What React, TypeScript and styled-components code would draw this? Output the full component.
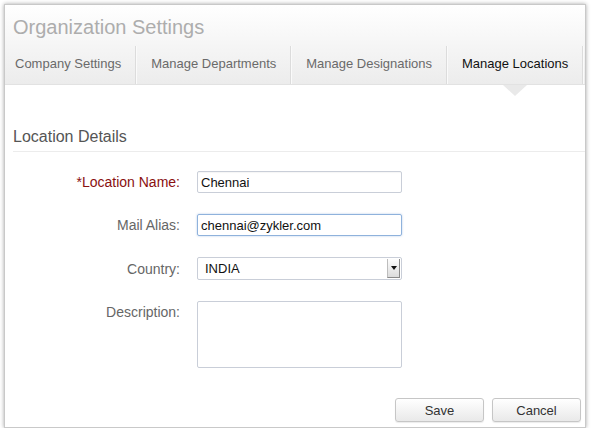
import React from "react";
import styled, { createGlobalStyle } from "styled-components";

const Global = createGlobalStyle`
  html, body { margin: 0; padding: 0; background: #ffffff; }
  body { font-family: "Liberation Sans", Arial, sans-serif; }
  * { box-sizing: border-box; }
`;

const Panel = styled.div`
  margin: 4px 0 0 4px;
  width: 582px;
  height: 424px;
  background: #fff;
  border: 1px solid #c9c9c9;
  box-shadow: 0 0 4px rgba(0, 0, 0, 0.35);
  display: flex;
  flex-direction: column;
  position: relative;
`;

const Header = styled.div`
  background: linear-gradient(#ffffff, #ececec);
  border-bottom: 1px solid #e2e2e2;
  display: flex;
  flex-direction: column;
`;

const Title = styled.div`
  height: 41px;
  padding: 10px 0 0 8px;
  font-size: 20px;
  color: #adadad;
  line-height: 24px;
`;

const Tabs = styled.div`
  display: flex;
  height: 38px;
`;

const Tab = styled.div<{ $active?: boolean; $first?: boolean }>`
  position: relative;
  display: flex;
  align-items: center;
  white-space: nowrap;
  padding: 0 14px 3px ${(p) => (p.$first ? "10px" : "15px")};
  border-right: 1px solid #dcdcdc;
  box-shadow: 1px 0 0 #fafafa;
  font-size: 13px;
  color: ${(p) => (p.$active ? "#111" : "#6a6a6a")};
`;

const Arrow = styled.div`
  position: absolute;
  left: 50%;
  bottom: -12px;
  margin-left: -12px;
  width: 0;
  height: 0;
  border-left: 12px solid transparent;
  border-right: 12px solid transparent;
  border-top: 11px solid #e9e9e9;
  z-index: 2;
`;

const Body = styled.div`
  flex: 1;
  display: flex;
  flex-direction: column;
  padding: 43px 0 0 8px;
`;

const SectionTitle = styled.div`
  font-size: 16px;
  color: #555;
  line-height: 18px;
  padding-bottom: 5px;
  border-bottom: 1px solid #ececec;
`;

const Form = styled.div`
  display: grid;
  grid-template-columns: 167px 205px;
  column-gap: 17px;
  row-gap: 21px;
  margin-top: 19px;
`;

const Label = styled.div<{ $required?: boolean; $top?: boolean }>`
  text-align: right;
  font-size: 14px;
  color: ${(p) => (p.$required ? "#8a1010" : "#666")};
  align-self: ${(p) => (p.$top ? "start" : "center")};
  padding-top: ${(p) => (p.$top ? "3px" : "0")};
`;

const Input = styled.div<{ $focused?: boolean }>`
  height: 22px;
  border: 1px solid ${(p) => (p.$focused ? "#8fb2dc" : "#c9ced8")};
  border-radius: 2px;
  box-shadow: ${(p) =>
    p.$focused ? "0 0 2px rgba(90,140,210,0.5)" : "inset 0 1px 1px rgba(0,0,0,0.04)"};
  font-size: 13px;
  color: #111;
  padding: 0 3px;
  display: flex;
  align-items: center;
`;

const Select = styled.div`
  height: 23px;
  border: 1px solid #c9ced8;
  border-radius: 2px;
  font-size: 13px;
  color: #111;
  padding: 0 1px 0 7px;
  display: flex;
  align-items: center;
  justify-content: space-between;
`;

const SelectButton = styled.div`
  width: 13px;
  height: 19px;
  background: linear-gradient(#fdfdfd, #dcdcdc);
  border-left: 1px solid #bdbdbd;
  border-right: 1px solid #8a8a8a;
  border-bottom: 1px solid #8a8a8a;
  display: flex;
  align-items: center;
  justify-content: center;
  &::after {
    content: "";
    border-left: 3px solid transparent;
    border-right: 3px solid transparent;
    border-top: 4px solid #111;
  }
`;

const TextArea = styled.div`
  height: 67px;
  border: 1px solid #c9ced8;
  border-radius: 2px;
`;

const Footer = styled.div`
  margin-top: auto;
  display: flex;
  justify-content: flex-end;
  gap: 8px;
  padding: 0 4px 5px 0;
`;

const Button = styled.div`
  width: 89px;
  height: 24px;
  border: 1px solid #c6c6c6;
  border-radius: 3px;
  background: linear-gradient(#ffffff, #e9e9e9);
  box-shadow: 0 1px 1px rgba(0, 0, 0, 0.08);
  font-size: 13px;
  color: #333;
  display: flex;
  align-items: center;
  justify-content: center;
`;

export default function App() {
  return (
    <>
      <Global />
      <Panel>
        <Header>
          <Title>Organization Settings</Title>
          <Tabs>
            <Tab $first>Company Settings</Tab>
            <Tab>Manage Departments</Tab>
            <Tab>Manage Designations</Tab>
            <Tab $active>
              Manage Locations
              <Arrow />
            </Tab>
          </Tabs>
        </Header>
        <Body>
          <SectionTitle>Location Details</SectionTitle>
          <Form>
            <Label $required>*Location Name:</Label>
            <Input>Chennai</Input>
            <Label>Mail Alias:</Label>
            <Input $focused>chennai@zykler.com</Input>
            <Label>Country:</Label>
            <Select>
              INDIA
              <SelectButton />
            </Select>
            <Label $top>Description:</Label>
            <TextArea />
          </Form>
          <Footer>
            <Button>Save</Button>
            <Button>Cancel</Button>
          </Footer>
        </Body>
      </Panel>
    </>
  );
}
